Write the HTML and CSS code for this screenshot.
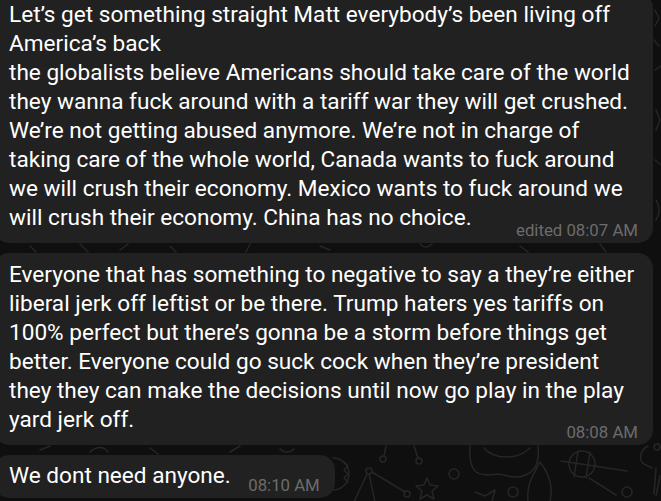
FILE: index.html
```html
<!DOCTYPE html>
<html lang="en">
<head>
<meta charset="utf-8">
<title>Chat</title>
<link rel="stylesheet" href="styles.css">
</head>
<body>
<div class="screen">
  <svg class="doodles" width="661" height="501" viewBox="0 0 661 501" fill="none" stroke="#262626" stroke-width="1.5" stroke-linecap="round" stroke-linejoin="round">
    <path d="M333 458 a14 14 0 0 1 0 32"/>
    <path d="M344 462 l4 4 -4 4 4 4 -4 4 4 4"/>
    <circle cx="383" cy="459" r="3"/>
    <path d="M384 456 l2 -10"/>
    <circle cx="419" cy="461" r="3"/>
    <path d="M418 458 l-4 -12"/>
    <circle cx="369" cy="471" r="3"/>
    <path d="M367 474 l-13 28"/>
    <path d="M372 472 l33 20"/>
    <path d="M369 474 l6 28"/>
    <circle cx="407" cy="494" r="3"/>
    <circle cx="454" cy="474" r="5"/>
    <path d="M427 478 l3 7 8 1 -6 5 2 8 -7 -4 -7 4 2 -8 -6 -5 8 -1 z"/>
    <path d="M470 440 c0 10 -2 25 6 32 c8 6 20 0 28 3 c10 3 22 3 30 -6 c6 -8 4 -20 4 -29"/>
    <path d="M484 448 c10 12 34 12 46 0"/>
    <path d="M475 492 l10 4 10 -6 -3 11"/>
    <circle cx="513" cy="492" r="5"/>
    <path d="M540 462 c8 10 14 22 10 39 M540 462 c-6 12 -14 22 -12 39"/>
    <circle cx="582" cy="464" r="13"/>
    <path d="M578 451 l-4 26 M590 452 l-4 26"/>
    <path d="M561 461 l66 10"/>
    <path d="M589 478 l27 17"/>
    <circle cx="627" cy="492" r="5"/>
    <path d="M648 446 c-8 4 -10 14 -4 18 l8 4 M656 468 l-2 26 M660 476 l-4 20"/>
    <circle cx="657" cy="447" r="3"/>
    <path d="M655 10 l4 8 -4 8 M654 40 l5 6 M655 70 l6 -4 M656 110 l4 10 -4 10 M655 160 l5 4 M656 200 c4 6 4 14 0 20"/>
    <path d="M30 246 l6 6 M80 244 l8 8 M120 250 l8 -6 M170 246 l6 6 M250 244 l-4 8 M320 246 l10 4 M420 244 c4 4 8 4 12 0 M520 246 l8 6 M600 244 l6 8"/>
    <path d="M40 450 l10 -4 M90 452 c6 -6 14 -6 18 0 M150 448 l8 6 M230 452 l10 -6 M280 449 c4 4 10 4 14 0"/>
  </svg>
  <div class="chat">
    <div class="bubble wide">
      <p class="text">Let’s get something straight Matt everybody’s been living off<br>America’s back<br>the globalists believe Americans should take care of the world<br>they wanna fuck around with a tariff war they will get crushed.<br>We’re not getting abused anymore. We’re not in charge of<br>taking care of the whole world, Canada wants to fuck around<br>we will crush their economy. Mexico wants to fuck around we<br>will crush their economy. China has no choice.</p>
      <span class="time">edited 08:07 AM</span>
    </div>
    <div class="bubble wide">
      <p class="text">Everyone that has something to negative to say a they’re either<br>liberal jerk off leftist or be there. Trump haters yes tariffs on<br>100% perfect but there’s gonna be a storm before things get<br>better. Everyone could go suck cock when they’re president<br>they they can make the decisions until now go play in the play<br>yard jerk off.</p>
      <span class="time">08:08 AM</span>
    </div>
    <div class="bubble last">
      <p class="text">We dont need anyone.<span class="spacer"></span></p>
      <span class="time">08:10 AM</span>
    </div>
  </div>
</div>
</body>
</html>
```
FILE: styles.css
```css
html, body {
  margin: 0;
  padding: 0;
}
body {
  background: #0f0f0f;
  width: 661px;
  height: 501px;
  overflow: hidden;
  font-family: Roboto, "Liberation Sans", sans-serif;
}
.screen {
  position: relative;
  width: 661px;
  height: 501px;
  overflow: hidden;
}
.doodles {
  position: absolute;
  left: 0;
  top: 0;
}
.chat {
  position: relative;
  display: flex;
  flex-direction: column;
  align-items: flex-start;
  gap: 10px;
  margin-top: -7px;
  margin-left: -6px;
}
.bubble {
  position: relative;
  background: #212121;
  border-radius: 15px;
  padding: 7px 15px 11px 15px;
  box-sizing: border-box;
}
.bubble.wide {
  width: 659px;
}
.bubble.last {
  padding-top: 6px;
  padding-bottom: 8px;
}
.text {
  margin: 0;
  color: #ffffff;
  font-size: 22.6px;
  line-height: 29px;
  white-space: nowrap;
}
.spacer {
  display: inline-block;
  width: 89px;
}
.time {
  position: absolute;
  right: 15px;
  bottom: 5px;
  color: #6c6c6c;
  font-size: 16.8px;
  line-height: 16px;
  white-space: nowrap;
}
```
